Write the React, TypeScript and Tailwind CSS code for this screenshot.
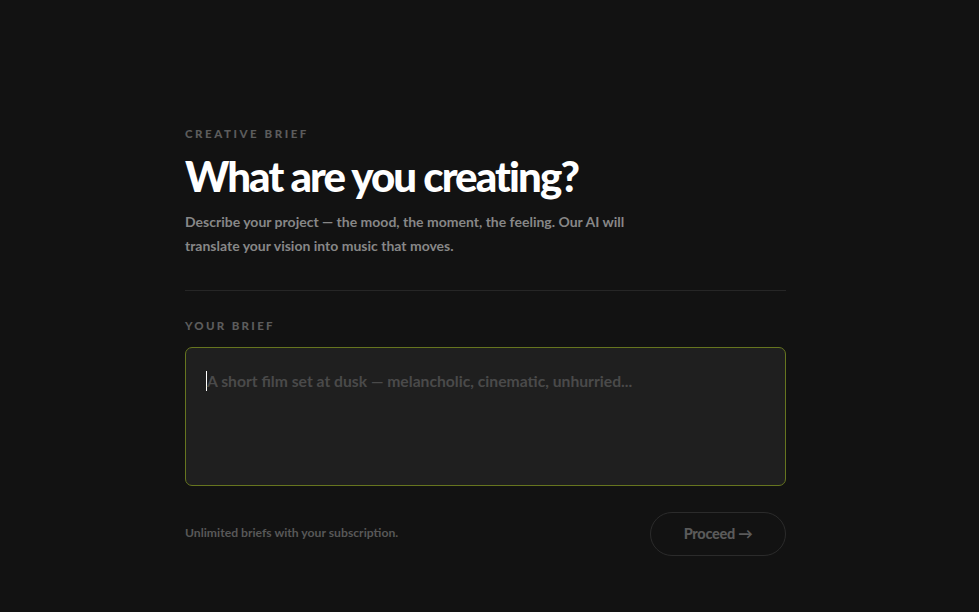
export default function App() {
  return (
    <main className="min-h-[612px] bg-[#121212] pl-[185px] pt-[125px] font-['Lato',sans-serif]">
      <section className="w-[601px]">
        <p className="text-[11.5px] font-black tracking-[0.22em] text-[#5c5c5c]">
          CREATIVE BRIEF
        </p>

        <h1 className="mt-[8px] text-[42px] font-black leading-[52px] tracking-[-0.045em] text-white">
          What are you creating?
        </h1>

        <p className="mt-[8px] max-w-[440px] text-[14px] font-bold leading-[24px] text-[#878787]">
          Describe your project — the mood, the moment, the feeling. Our AI will
          translate your vision into music that moves.
        </p>

        <div className="mt-[32px] h-px bg-[#262626]" />

        <p className="mt-[26px] text-[11.5px] font-black tracking-[0.2em] text-[#5c5c5c]">
          YOUR BRIEF
        </p>

        <div className="mt-[12px] h-[139px] rounded-[7px] border border-[#66751f] bg-[#1f1f1f] px-[20px] pt-[22px]">
          <div className="flex items-center">
            <span className="h-[20px] w-px bg-white" />
            <span className="text-[15.7px] font-bold text-[#4a4a4a]">
              A short film set at dusk — melancholic, cinematic, unhurried...
            </span>
          </div>
        </div>

        <div className="mt-[26px] flex items-center justify-between">
          <p className="text-[12.2px] font-bold text-[#585858]">
            Unlimited briefs with your subscription.
          </p>
          <button className="h-[44px] w-[136px] rounded-full border border-[#2b2b2b] text-[14.5px] font-black tracking-[-0.02em] text-[#5a5a5a]">
            Proceed →
          </button>
        </div>
      </section>
    </main>
  );
}
